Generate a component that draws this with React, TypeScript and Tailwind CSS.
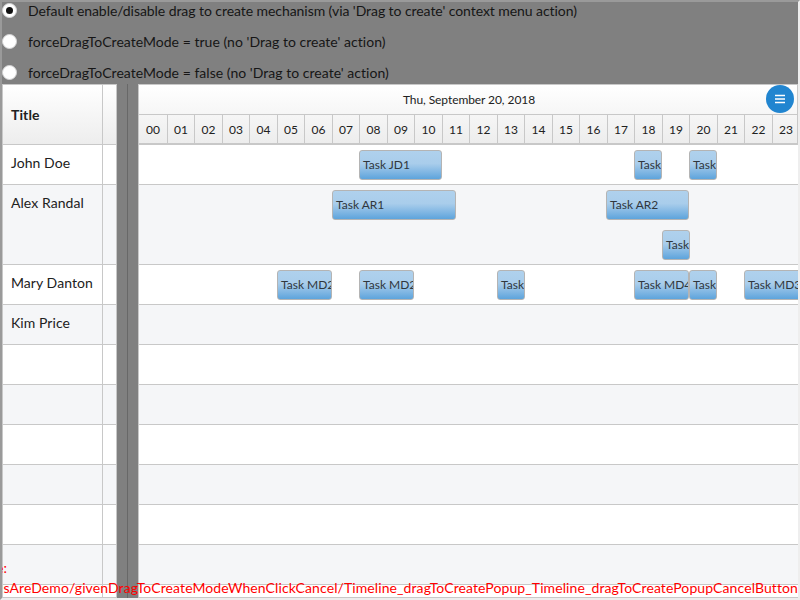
import React from 'react';

type Task = { label: string; left: number; top: number; width: number };
type Row = { name: string; tall?: boolean; tasks: Task[] };

const options = [
  { label: "Default enable/disable drag to create mechanism (via 'Drag to create' context menu action)", tracking: 'tracking-[-0.064px]' },
  { label: "forceDragToCreateMode = true (no 'Drag to create' action)", tracking: 'tracking-[0.03px]' },
  { label: "forceDragToCreateMode = false (no 'Drag to create' action)", tracking: 'tracking-[0.03px]' },
];

// Task offsets are relative to the row they are scheduled in.
const rows: Row[] = [
  {
    name: 'John Doe',
    tasks: [
      { label: 'Task JD1', left: 220, top: 5, width: 83 },
      { label: 'Task', left: 495, top: 5, width: 28 },
      { label: 'Task', left: 550, top: 5, width: 28 },
    ],
  },
  {
    name: 'Alex Randal',
    tall: true,
    tasks: [
      { label: 'Task AR1', left: 193, top: 5, width: 124 },
      { label: 'Task AR2', left: 467, top: 5, width: 83 },
      { label: 'Task', left: 523, top: 45, width: 28 },
    ],
  },
  {
    name: 'Mary Danton',
    tasks: [
      { label: 'Task MD2', left: 138, top: 5, width: 55 },
      { label: 'Task MD2', left: 220, top: 5, width: 55 },
      { label: 'Task', left: 358, top: 5, width: 28 },
      { label: 'Task MD4', left: 495, top: 5, width: 55 },
      { label: 'Task', left: 550, top: 5, width: 28 },
      { label: 'Task MD3', left: 605, top: 5, width: 83 },
    ],
  },
  { name: 'Kim Price', tasks: [] },
  { name: '', tasks: [] },
  { name: '', tasks: [] },
  { name: '', tasks: [] },
  { name: '', tasks: [] },
  { name: '', tasks: [] },
  { name: '', tasks: [] },
  { name: '', tasks: [] },
];

const hours = Array.from({ length: 24 }, (_, i) => String(i).padStart(2, '0'));

function hourWidth(i: number) {
  if (i === 0) return 'w-[29px]';
  return i % 2 ? 'w-[27px]' : 'w-[28px]';
}

function rowClass(row: Row, i: number) {
  return `${row.tall ? 'h-20' : 'h-10'} ${i % 2 ? 'bg-[#f5f6f8]' : 'bg-white'} shrink-0 border-b border-[#c8c8c8]`;
}

function Option({ label, tracking, checked }: { label: string; tracking: string; checked: boolean }) {
  return (
    <div className="flex h-[31px] items-start">
      <span className="mt-px flex size-[15px] shrink-0 items-center justify-center rounded-full border border-[#d4d4d5] bg-white">
        {checked && <span className="size-[7px] rounded-full bg-[#111]" />}
      </span>
      <span className={`ml-[11px] text-[14px] leading-[18px] whitespace-nowrap ${tracking}`}>{label}</span>
    </div>
  );
}

export default function App() {
  return (
    <div className="relative flex h-[600px] w-[800px] flex-col overflow-hidden border-2 border-t-[#9a9a9a] border-r-[#eeeeee] border-b-[#eeeeee] border-l-[#9a9a9a] bg-[#808080] font-[Lato,sans-serif] text-[#212121] [font-variant-ligatures:none]">
      <div className="h-[82px] shrink-0 text-[#161616]">
        {options.map((o, i) => (
          <Option key={o.label} {...o} checked={i === 0} />
        ))}
      </div>

      <div className="flex h-[514px] shrink-0">
        <div className="flex w-[115px] shrink-0 flex-col overflow-hidden border border-[#c8c8c8] bg-white">
          <div className="flex h-[60px] shrink-0 border-b border-[#c8c8c8] bg-linear-to-b from-white to-[#ededed]">
            <div className="flex w-[100px] items-center border-r border-[#c8c8c8] pl-2 text-[14px] font-bold tracking-[0.1px]">Title</div>
          </div>
          {rows.map((row, i) => (
            <div key={i} className={rowClass(row, i)}>
              <div className="h-[calc(100%+1px)] w-[100px] border-r border-[#c8c8c8] pt-[9px] pl-2 text-[14px] leading-[18px] tracking-[0.06px] whitespace-nowrap">
                {row.name}
              </div>
            </div>
          ))}
        </div>

        <div className="flex w-[21px] shrink-0">
          <div className="w-[11px] border-r border-[#686868]" />
        </div>

        <div className="flex w-[660px] shrink-0 flex-col overflow-hidden border border-r-0 border-[#c8c8c8] bg-white">
          <div className="h-[60px] shrink-0 overflow-hidden border-r border-b-2 border-[#c8c8c8] bg-linear-to-b from-white to-[#ededed]">
            <div className="flex h-[30px] items-center justify-center border-b border-[#c8c8c8] pt-px pl-[2px] text-[12px] tracking-[-0.08px]">
              Thu, September 20, 2018
            </div>
            <div className="flex h-[28px]">
              {hours.map((h, i) => (
                <div
                  key={h}
                  className={`${hourWidth(i)} flex shrink-0 items-center justify-center border-r border-[#c8c8c8] pt-[2px] text-[12px]`}
                >
                  {h}
                </div>
              ))}
            </div>
          </div>
          {rows.map((row, i) => (
            <div key={i} className={`relative ${rowClass(row, i)}`}>
              {row.tasks.map((t, j) => (
                <div
                  key={j}
                  className="absolute h-[30px] overflow-hidden rounded-[3px] border border-[#b4b4b4] bg-linear-to-b from-[#afd1ed] from-0% via-[#a9cdeb] via-45% to-[#5da4dc] pl-[3px] text-[12px] leading-[28px] whitespace-nowrap text-[#30373d]"
                  style={{ left: t.left, top: t.top, width: t.width }}
                >
                  {t.label}
                </div>
              ))}
            </div>
          ))}
        </div>
      </div>

      <button className="absolute top-[83px] left-[764px] flex size-7 flex-col items-center justify-center rounded-full bg-[#2185d0]">
        <svg width="10" height="10" viewBox="0 0 10 10" fill="none" stroke="white" strokeWidth="1.4">
          <path d="M0 1.5h10M0 5h10M0 8.5h10" />
        </svg>
      </button>

      <div className="absolute right-0 bottom-0 flex h-10 w-[796px] flex-col items-end text-[14px] leading-5 whitespace-nowrap text-[#ff0000]">
        <div className="-ml-[6px] self-start">e:</div>
        <div className="tracking-[0.095px]">sAreDemo/givenDragToCreateModeWhenClickCancel/Timeline_dragToCreatePopup_Timeline_dragToCreatePopupCancelButton</div>
      </div>
    </div>
  );
}
